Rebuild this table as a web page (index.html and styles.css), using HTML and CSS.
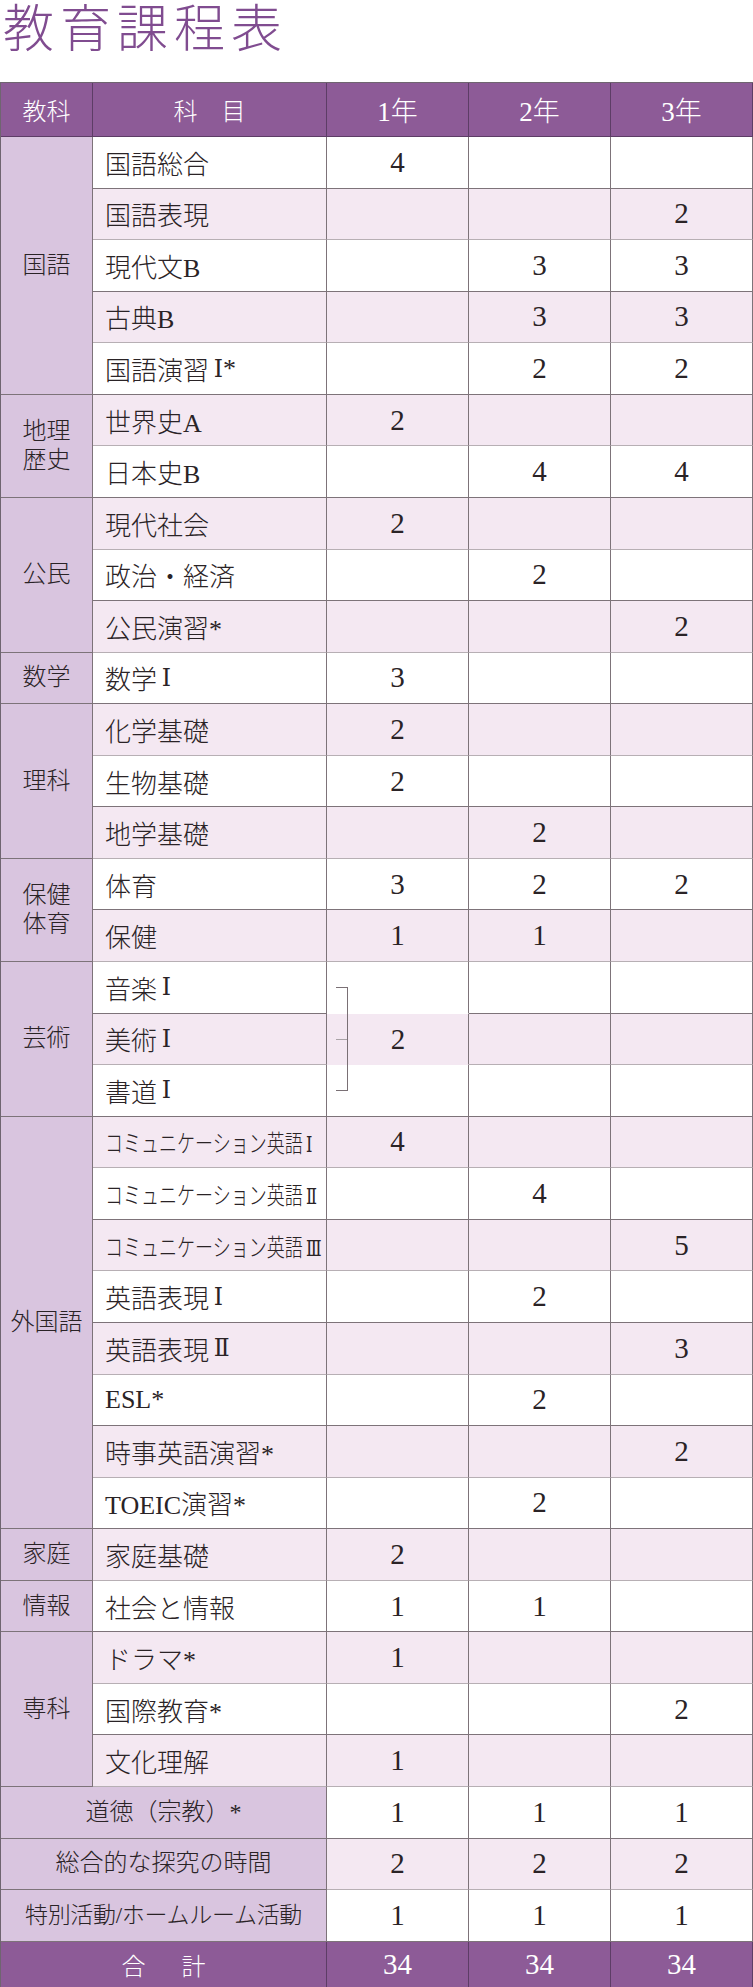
FILE: index.html
```html
<!DOCTYPE html>
<html lang="ja">
<head>
<meta charset="utf-8">
<title>教育課程表</title>
<link rel="stylesheet" href="styles.css">
</head>
<body>
<h1 class="title">教育課程表</h1>
<div class="curriculum">
  <div class="th">教科</div><div class="th">科　目</div><div class="th num">1年</div><div class="th num">2年</div><div class="th num">3年</div>

  <div class="cat s5">国語</div>
  <div class="sub w">国語総合</div><div class="n w">4</div><div class="n w"></div><div class="n w"></div>
  <div class="sub p">国語表現</div><div class="n p"></div><div class="n p"></div><div class="n p">2</div>
  <div class="sub w">現代文B</div><div class="n w"></div><div class="n w">3</div><div class="n w">3</div>
  <div class="sub p">古典B</div><div class="n p"></div><div class="n p">3</div><div class="n p">3</div>
  <div class="sub w">国語演習<span class="rn">Ⅰ</span>*</div><div class="n w"></div><div class="n w">2</div><div class="n w">2</div>

  <div class="cat s2 two">地理<br>歴史</div>
  <div class="sub p">世界史A</div><div class="n p">2</div><div class="n p"></div><div class="n p"></div>
  <div class="sub w">日本史B</div><div class="n w"></div><div class="n w">4</div><div class="n w">4</div>

  <div class="cat s3">公民</div>
  <div class="sub p">現代社会</div><div class="n p">2</div><div class="n p"></div><div class="n p"></div>
  <div class="sub w">政治・経済</div><div class="n w"></div><div class="n w">2</div><div class="n w"></div>
  <div class="sub p">公民演習*</div><div class="n p"></div><div class="n p"></div><div class="n p">2</div>

  <div class="cat">数学</div>
  <div class="sub w">数学<span class="rn">Ⅰ</span></div><div class="n w">3</div><div class="n w"></div><div class="n w"></div>

  <div class="cat s3">理科</div>
  <div class="sub p">化学基礎</div><div class="n p">2</div><div class="n p"></div><div class="n p"></div>
  <div class="sub w">生物基礎</div><div class="n w">2</div><div class="n w"></div><div class="n w"></div>
  <div class="sub p">地学基礎</div><div class="n p"></div><div class="n p">2</div><div class="n p"></div>

  <div class="cat s2 two">保健<br>体育</div>
  <div class="sub w">体育</div><div class="n w">3</div><div class="n w">2</div><div class="n w">2</div>
  <div class="sub p">保健</div><div class="n p">1</div><div class="n p">1</div><div class="n p"></div>

  <div class="cat s3">芸術</div>
  <div class="sub w">音楽<span class="rn">Ⅰ</span></div><div class="n w art1 open"></div><div class="n w"></div><div class="n w"></div>
  <div class="sub p">美術<span class="rn">Ⅰ</span></div><div class="n p art2 open"></div><div class="n p"></div><div class="n p"></div>
  <div class="sub w">書道<span class="rn">Ⅰ</span></div><div class="n w art3"></div><div class="n w"></div><div class="n w"></div>
  <div class="art-choice"><span class="bracket"></span><span class="art-num">2</span><span></span></div>

  <div class="cat s8">外国語</div>
  <div class="sub p"><span class="squeeze">コミュニケーション英語<span class="rn">Ⅰ</span></span></div><div class="n p">4</div><div class="n p"></div><div class="n p"></div>
  <div class="sub w"><span class="squeeze">コミュニケーション英語<span class="rn">Ⅱ</span></span></div><div class="n w"></div><div class="n w">4</div><div class="n w"></div>
  <div class="sub p"><span class="squeeze">コミュニケーション英語<span class="rn">Ⅲ</span></span></div><div class="n p"></div><div class="n p"></div><div class="n p">5</div>
  <div class="sub w">英語表現<span class="rn">Ⅰ</span></div><div class="n w"></div><div class="n w">2</div><div class="n w"></div>
  <div class="sub p">英語表現<span class="rn">Ⅱ</span></div><div class="n p"></div><div class="n p"></div><div class="n p">3</div>
  <div class="sub w">ESL*</div><div class="n w"></div><div class="n w">2</div><div class="n w"></div>
  <div class="sub p">時事英語演習*</div><div class="n p"></div><div class="n p"></div><div class="n p">2</div>
  <div class="sub w">TOEIC演習*</div><div class="n w"></div><div class="n w">2</div><div class="n w"></div>

  <div class="cat">家庭</div>
  <div class="sub p">家庭基礎</div><div class="n p">2</div><div class="n p"></div><div class="n p"></div>

  <div class="cat">情報</div>
  <div class="sub w">社会と情報</div><div class="n w">1</div><div class="n w">1</div><div class="n w"></div>

  <div class="cat s3">専科</div>
  <div class="sub p">ドラマ*</div><div class="n p">1</div><div class="n p"></div><div class="n p"></div>
  <div class="sub w">国際教育*</div><div class="n w"></div><div class="n w"></div><div class="n w">2</div>
  <div class="sub p">文化理解</div><div class="n p">1</div><div class="n p"></div><div class="n p"></div>

  <div class="cat wide">道徳（宗教）*</div><div class="n w">1</div><div class="n w">1</div><div class="n w">1</div>
  <div class="cat wide">総合的な探究の時間</div><div class="n p">2</div><div class="n p">2</div><div class="n p">2</div>
  <div class="cat wide tight">特別活動/ホームルーム活動</div><div class="n w">1</div><div class="n w">1</div><div class="n w">1</div>

  <div class="tot wide sum-label">合　計</div><div class="tot num">34</div><div class="tot num">34</div><div class="tot num">34</div>
</div>
</body>
</html>
```

FILE: styles.css
```css
* {
  box-sizing: border-box;
}

html, body {
  margin: 0;
  padding: 0;
  background: #ffffff;
}

body {
  width: 753px;
  font-family: "Liberation Serif", "DejaVu Serif", "Noto Sans CJK JP", serif;
  color: #2a2326;
}

.title {
  margin: 0;
  height: 82px;
  padding: 0 0 0 3px;
  font-family: "Noto Sans CJK JP", sans-serif;
  font-weight: 300;
  font-size: 51px;
  line-height: 50px;
  letter-spacing: 6px;
  color: #804c90;
}

.curriculum {
  display: grid;
  grid-template-columns: 92px 234px 142px 142px 142px;
  grid-template-rows: 54px repeat(35, 51.57px) 46px;
  border-left: 1px solid #6f6570;
  border-top: 1px solid #6f6570;
}

.curriculum > div {
  border-right: 1px solid #7d7379;
  border-bottom: 1px solid #7d7379;
  display: flex;
  align-items: center;
  justify-content: center;
  font-family: "Liberation Serif", "DejaVu Serif", "Noto Sans CJK JP", serif;
  font-weight: 300;
}

.th {
  background: #8d5b97;
  color: #ffffff;
  font-size: 24px;
  border-color: #5d3d66 !important;
}

.n,
.tot.num {
  font-size: 29px;
}

.th.num {
  font-size: 27px;
}

.cat {
  background: #d9c5df;
  font-size: 24px;
  line-height: 29px;
  text-align: center;
}

.s2 { grid-row: span 2; }
.s3 { grid-row: span 3; }
.s5 { grid-row: span 5; }
.s8 { grid-row: span 8; }

.wide {
  grid-column: span 2;
}

.tight {
  font-size: 23px !important;
  letter-spacing: -0.3px;
}

.sub {
  justify-content: flex-start !important;
  padding-left: 12px;
  font-size: 26px;
  white-space: nowrap;
}

.rn {
  font-family: "DejaVu Serif", "Liberation Serif", serif;
  font-weight: 300;
  font-size: 0.9em;
  margin-left: 0.2em;
}

.squeeze {
  display: inline-block;
  font-size: 24px;
  transform: scaleX(0.75);
  transform-origin: left center;
}

.w {
  background: #ffffff;
}

.p {
  background: #f4e8f2;
}

.p.sub,
.n.p {
  border-bottom-color: #b7afb4 !important;
}

.art1 { grid-row: 18; grid-column: 3; }
.art2 { grid-row: 19; grid-column: 3; }
.art3 { grid-row: 20; grid-column: 3; }

.curriculum > .open {
  border-bottom-color: transparent !important;
}

.curriculum > .art-choice {
  grid-row: 18 / 21;
  grid-column: 3;
  display: grid;
  grid-template-columns: 1fr auto 1fr;
  align-items: center;
  border: none;
  background: transparent;
  font-size: 29px;
}

.bracket {
  justify-self: start;
  margin-left: 9px;
  width: 12px;
  height: 104px;
  border-top: 1px solid #7a7075;
  border-right: 1px solid #7a7075;
  border-bottom: 1px solid #7a7075;
  background: linear-gradient(#a9a3a7, #a9a3a7) left center / 11px 1px no-repeat;
}

.tot {
  background: #8d5b97;
  color: #ffffff;
  border-color: #5d3d66 !important;
}

.sum-label {
  font-size: 24px;
  letter-spacing: 6px;
  padding-left: 6px;
}
```
